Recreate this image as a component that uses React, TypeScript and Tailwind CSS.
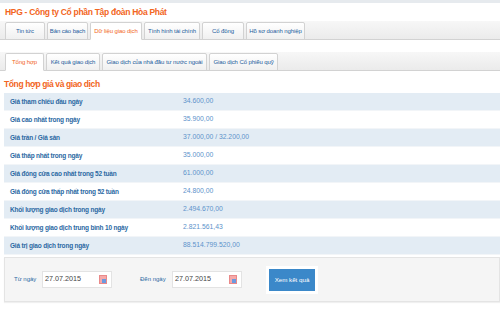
import React from "react";

const mainTabs = [
  { label: "Tin tức", w: "w-[40px]" },
  { label: "Bản cáo bạch", w: "w-[41px]" },
  { label: "Dữ liệu giao dịch", w: "w-[52px]", active: true },
  { label: "Tình hình tài chính", w: "w-[56px]" },
  { label: "Cổ đông", w: "w-[42px]" },
  { label: "Hồ sơ doanh nghiệp", w: "w-[59px]" },
];

const subTabs = [
  { label: "Tổng hợp", w: "w-[39px]", active: true },
  { label: "Kết quả giao dịch", w: "w-[54px]" },
  { label: "Giao dịch của nhà đầu tư nước ngoài", w: "w-[105px]" },
  { label: "Giao dịch Cổ phiếu quỹ", w: "w-[69px]" },
];

const rows = [
  ["Giá tham chiếu đầu ngày", "34.600,00"],
  ["Giá cao nhất trong ngày", "35.900,00"],
  ["Giá trần / Giá sàn", "37.000,00 / 32.200,00"],
  ["Giá thấp nhất trong ngày", "35.000,00"],
  ["Giá đóng cửa cao nhất trong 52 tuần", "61.000,00"],
  ["Giá đóng cửa thấp nhất trong 52 tuần", "24.800,00"],
  ["Khối lượng giao dịch trong ngày", "2.494.670,00"],
  ["Khối lượng giao dịch trung bình 10 ngày", "2.821.561,43"],
  ["Giá trị giao dịch trong ngày", "88.514.799.520,00"],
];

function Tab({ label, w, active }: { label: string; w: string; active?: boolean }) {
  return (
    <div
      className={
        "-mb-px flex h-[18px] items-center justify-center whitespace-nowrap rounded-t-[2px] border border-[#d2d2d2] text-[6px] tracking-[-0.1px] " +
        w +
        (active
          ? " border-b-white bg-white text-[#f26522]"
          : " bg-gradient-to-b from-white to-[#f0f0f0] text-[#1d5c9c]")
      }
    >
      {label}
    </div>
  );
}

function DateInput({ value }: { value: string }) {
  return (
    <div className="flex h-[17px] w-[70px] items-center justify-between border border-[#e3e3e3] bg-white pl-[2px] pr-[4px]">
      <span className="text-[7.2px] text-[#444]">{value}</span>
      <span className="relative h-[9px] w-[8px] border border-[#e98a8a] bg-[#f6a9a9]">
        <span className="absolute bottom-0 right-0 h-[4px] w-[4px] bg-[#6b9ae0]" />
      </span>
    </div>
  );
}

export default function App() {
  return (
    <div
      className="h-[312px] w-[500px] overflow-hidden bg-white"
      style={{ fontFamily: "'Liberation Sans', Arial, sans-serif" }}
    >
      <div className="h-[3px] bg-[#e6eaee]" />
      <div className="flex h-[18px] items-center whitespace-nowrap px-[5px] text-[8.5px] font-bold tracking-[-0.3px] text-[#f26522]">
        HPG - Công ty Cổ phần Tập đoàn Hòa Phát
      </div>

      <div className="flex h-[19px] items-end gap-[2px] border-b border-[#d2d2d2] bg-gradient-to-b from-[#f7f7f7] to-[#ebebeb] pl-[5px]">
        {mainTabs.map((t) => (
          <Tab key={t.label} {...t} />
        ))}
      </div>

      <div className="mt-[12px] flex h-[19px] items-end gap-[2px] border-b border-[#d2d2d2] bg-gradient-to-b from-[#f7f7f7] to-[#ebebeb] pl-[5px]">
        {subTabs.map((t) => (
          <Tab key={t.label} {...t} />
        ))}
      </div>

      <div className="whitespace-nowrap px-[4px] pt-[6px] text-[8.5px] font-bold leading-[15px] tracking-[-0.4px] text-[#f26522]">
        Tổng hợp giá và giao dịch
      </div>

      <div className="ml-[4px] mt-[1px] flex flex-col">
        {rows.map(([k, v], i) => (
          <div
            key={k}
            className={
              "flex h-[18px] items-center whitespace-nowrap border-b border-[#f2f5f8] " +
              (i % 2 === 0 ? "bg-[#e3ecf4]" : "bg-white")
            }
          >
            <div className="w-[179px] pl-[6px] text-[6.5px] font-bold tracking-[-0.2px] text-[#2b69a3]">{k}</div>
            <div className="text-[6.8px] text-[#5d93cb]">{v}</div>
          </div>
        ))}
      </div>

      <div className="ml-[4px] mt-[2px] flex h-[45px] items-center border border-[#e4e4e4] bg-[#f5f5f5] pl-[9px] shadow-[0_1px_1px_rgba(0,0,0,0.06)]">
        <span className="w-[28px] whitespace-nowrap text-[6px] text-[#2b69a3]">Từ ngày</span>
        <DateInput value="27.07.2015" />
        <span className="ml-[28px] w-[32px] whitespace-nowrap text-[6px] text-[#2b69a3]">Đến ngày</span>
        <DateInput value="27.07.2015" />
        <div className="ml-[24px] bg-white p-[3px]">
          <div className="flex h-[22px] w-[46px] items-center justify-center whitespace-nowrap bg-[#3b88c9] text-[6.2px] text-white">
            Xem kết quả
          </div>
        </div>
      </div>
    </div>
  );
}
